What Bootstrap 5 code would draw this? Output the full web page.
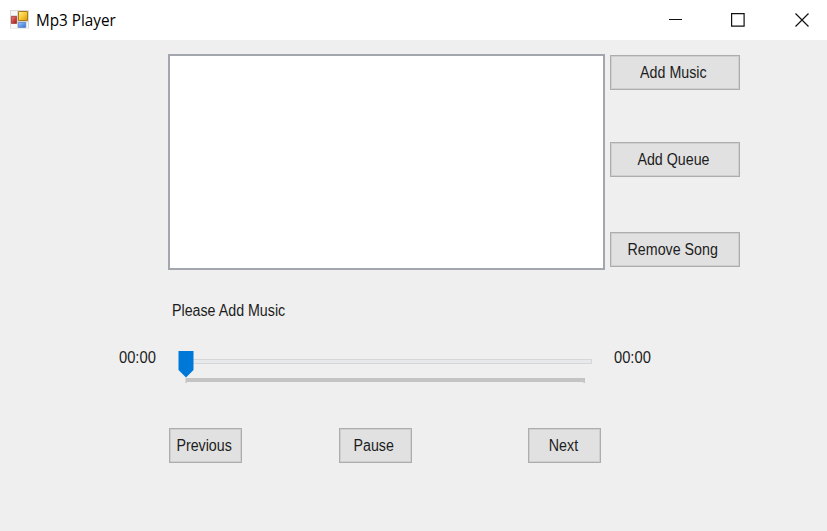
<!DOCTYPE html>
<html lang="en">
<head>
<meta charset="utf-8">
<meta name="viewport" content="width=device-width, initial-scale=1">
<title>Mp3 Player</title>
<link href="https://cdn.jsdelivr.net/npm/bootstrap@5.3.0/dist/css/bootstrap.min.css" rel="stylesheet">
<style>
body{background:#efefef;color:#1c1c1c;font:16px/20px "Liberation Sans",Arial,sans-serif;height:531px;overflow:hidden}
.titlebar{height:40px;background:#fff;padding-left:10px}
.titlebar h1{font:16px/20px "Open Sans","Noto Sans",sans-serif;color:#000;margin-left:6px}
.caption-text{display:inline-block;transform:scaleX(.955);transform-origin:left}
.captions{gap:49px;margin-right:18px}
.captions svg:nth-child(2){margin:0 1px 0 -1px}
.form-label-text,.win-btn span{display:inline-block;transform:scaleX(.89);white-space:nowrap}
.form-label-text{transform-origin:left}
.win-btn{width:73px;height:35px;background:#e1e1e1;border:1px solid #adadad;box-shadow:inset 0 0 0 1px #cfcfcf;border-radius:0;padding:0 3px 0 0;font-size:16px;line-height:20px;color:#1c1c1c}
.side .win-btn{width:130px;padding-right:4px}
.upper{padding:14px 0 0 168px;gap:5px}
.playlist{width:437px;height:216px;background:#fff;border:2px solid #a3a6ac}
.side{padding-top:1px;width:130px}
.gap-a{margin-bottom:52px}.gap-b{margin-bottom:55px}
.status{margin:31px 0 0 172px;height:20px}
.seek{margin:27px 0 0 119px;height:50px}
.seek .form-label-text{width:59px;transform:scaleX(.92)}
.seek svg{display:block}
.controls{margin:30px 0 0 169px;width:432px}
.controls .first{margin-right:97px}.controls .second{margin-right:116px}
</style>
<script src="https://cdn.jsdelivr.net/npm/bootstrap@5.3.0/dist/js/bootstrap.bundle.min.js"></script>
</head>
<body>
<header class="titlebar d-flex align-items-center">
<svg width="20" height="20" viewBox="0 0 20 20" aria-hidden="true">
<defs>
<linearGradient id="y" x2="1" y2="1"><stop stop-color="#fff0a0"/><stop offset=".5" stop-color="#f8c938"/><stop offset="1" stop-color="#d79a08"/></linearGradient>
<linearGradient id="r" x2="1" y2="1"><stop stop-color="#e8837a"/><stop offset="1" stop-color="#a91210"/></linearGradient>
<linearGradient id="b" x2="1" y2="1"><stop stop-color="#9cc7ff"/><stop offset="1" stop-color="#2f6fdc"/></linearGradient>
</defs>
<path fill="#d9d9d9" d="M0 0h19v18.500H0z"/><path fill="#f7f7f7" d="M1 1h6v4.500H1zM1 14h6v4H1zM16.500 12.500H18V18h-1.500z"/>
<path fill="url(#y)" stroke="#a97b14" d="M8.500 1.500h9v9h-9z"/>
<path fill="url(#r)" stroke="#a43a35" stroke-width=".8" d="M1.400 6.400h5.200v7H1.400z"/>
<path fill="url(#b)" stroke="#5b86c4" stroke-width=".8" d="M8.400 12.400h7.200v5H8.400z"/>
</svg>
<h1 class="mb-0"><span class="caption-text">Mp3 Player</span></h1>
<div class="captions d-flex align-items-center ms-auto">
<svg width="14" height="14" aria-label="Minimize"><path d="M0 6.500h13" stroke="#111"/></svg>
<svg width="14" height="14" aria-label="Maximize"><path d="M.6.600h12.500v12.500H.6z" fill="none" stroke="#111" stroke-width="1.200"/></svg>
<svg width="14" height="14" aria-label="Close"><path d="M.5.500l13 13m0-13l-13 13" stroke="#111" stroke-width="1.200"/></svg>
</div>
</header>
<main>
<section class="upper d-flex">
<div class="playlist"></div>
<div class="side d-flex flex-column">
<button class="btn win-btn gap-a"><span>Add Music</span></button>
<button class="btn win-btn gap-b"><span>Add Queue</span></button>
<button class="btn win-btn"><span>Remove Song</span></button>
</div>
</section>
<div class="status"><span class="form-label-text">Please Add Music</span></div>
<div class="seek d-flex">
<span class="form-label-text">00:00</span>
<svg width="436" height="50" aria-label="Seek">
<path fill="#e7eaea" stroke="#d6d6d6" d="M8.500 11.500h405v4h-405z"/>
<path fill="#c4c4c4" d="M7.500 30h399.500v5h-1.500v-1H9v1H7.500z"/>
<path fill="#0078d7" d="M.5 3h15v19l-7.500 7.500L.5 22z"/>
</svg>
<span class="form-label-text">00:00</span>
</div>
<div class="controls d-flex">
<button class="btn win-btn first"><span>Previous</span></button>
<button class="btn win-btn second"><span>Pause</span></button>
<button class="btn win-btn"><span>Next</span></button>
</div>
</main>
</body>
</html>
